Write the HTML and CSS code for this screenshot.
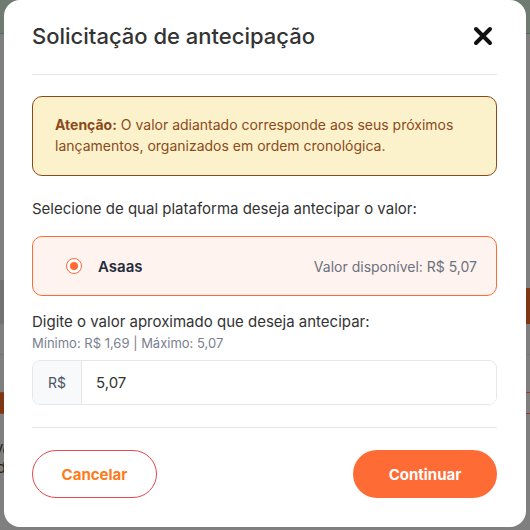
FILE: index.html
```html
<!DOCTYPE html>
<html lang="pt-BR">
<head>
  <meta charset="UTF-8">
  <meta name="viewport" content="width=device-width, initial-scale=1.0">
  <title>Solicitação de antecipação</title>
  <link rel="stylesheet" href="styles.css">
</head>
<body>

<div class="page">
  <div class="page-top"></div>
  <div class="page-band">
    <div class="band-left"></div>
    <div class="band-right"></div>
  </div>
  <div class="page-rule"></div>
  <div class="page-alert"></div>
  <div class="page-text">Ve<br>ld</div>
</div>

<div class="modal">
  <div class="modal-content">
    <div class="modal-header">
      <h2>Solicitação de antecipação</h2>
      <span class="close">
        <svg width="20" height="20" viewBox="0 0 20 20"><path d="M3 3 L17 17 M17 3 L3 17" stroke="#111" stroke-width="4" stroke-linecap="round"/></svg>
      </span>
    </div>

    <div class="alert">
      <strong>Atenção:</strong> O valor adiantado corresponde aos seus próximos lançamentos, organizados em ordem cronológica.
    </div>

    <p class="label">Selecione de qual plataforma deseja antecipar o valor:</p>

    <label class="option">
      <span class="radio"><span class="dot"></span></span>
      <span class="option-name">Asaas</span>
      <span class="option-value">Valor disponível: R$ 5,07</span>
    </label>

    <p class="label label-tight">Digite o valor aproximado que deseja antecipar:</p>
    <p class="hint">Mínimo: R$ 1,69 | Máximo: 5,07</p>

    <div class="input-group">
      <span class="prefix">R$</span>
      <input class="amount" type="text" value="5,07">
    </div>

    <div class="modal-footer">
      <button class="btn-cancel">Cancelar</button>
      <button class="btn-continue">Continuar</button>
    </div>
  </div>
</div>

</body>
</html>
```

FILE: styles.css
```css
body {
  font-family: Inter, 'Noto Sans', sans-serif;
  background-color: #7f7f7f;
  margin: 0;
  padding: 0;
  height: 530px;
  overflow: hidden;
}
.page {
  height: 530px;
}
.page-top {
  height: 33px;
  background-color: #6f7a71;
  border-bottom: 1px solid #4f6d57;
}
.page-band {
  display: flex;
  height: 44px;
  margin-top: 246px;
}
.band-left {
  width: 50%;
  background-color: #727272;
}
.band-right {
  width: 50%;
  margin-top: 8px;
  background-color: #7e3712;
}
.page-rule {
  height: 1px;
  margin-top: 30px;
  background-color: #777;
}
.page-alert {
  height: 20px;
  margin-top: 37px;
  border-top: 1px solid #9a3b2a;
  border-bottom: 1px solid #9a3b2a;
  background: linear-gradient(to right, #7e3712 6px, transparent 6px);
}
.page-text {
  margin-top: 27px;
  margin-left: -7px;
  font-size: 15px;
  line-height: 18px;
  color: #222;
}
.modal {
  position: fixed;
  left: 0;
  top: 0;
  width: 100%;
  height: 100%;
}
.modal-content {
  box-sizing: border-box;
  width: 522px;
  height: 527px;
  margin: 0 auto;
  padding: 0 29px 0 28px;
  background-color: #fff;
  border-radius: 16px;
  display: flex;
  flex-direction: column;
}
.modal-header {
  display: flex;
  justify-content: space-between;
  align-items: center;
  padding: 23px 0 25px 0;
  border-bottom: 1px solid #e6e6e6;
}
.modal-header h2 {
  margin: 0;
  font-size: 22px;
  font-weight: 500;
  color: #333;
}
.close {
  display: flex;
  margin-right: 4px;
  cursor: pointer;
}
.alert {
  margin-top: 21px;
  padding: 17px 22px 19px 22px;
  background-color: #fbf2cb;
  border: 1px solid #8a4a1c;
  border-radius: 10px;
  color: #8a4a1c;
  font-size: 14px;
  line-height: 21px;
}
.alert strong {
  font-weight: 700;
}
.label {
  margin: 23px 0 0 0;
  font-size: 15px;
  color: #333;
}
.label-tight {
  margin-top: 16px;
}
.option {
  margin-top: 18px;
  height: 60px;
  box-sizing: border-box;
  display: flex;
  align-items: center;
  padding: 0 19px 0 33px;
  background-color: #fff3ef;
  border: 1px solid #ff6b35;
  border-radius: 10px;
  cursor: pointer;
}
.radio {
  width: 16px;
  height: 16px;
  box-sizing: border-box;
  border: 1.5px solid #ff6b35;
  border-radius: 50%;
  display: flex;
  align-items: center;
  justify-content: center;
  background-color: #fff;
}
.dot {
  width: 8px;
  height: 8px;
  border-radius: 50%;
  background-color: #ff6b35;
}
.option-name {
  margin-left: 16px;
  font-size: 15px;
  font-weight: 600;
  color: #222b3a;
}
.option-value {
  margin-left: auto;
  font-size: 14px;
  color: #6b7280;
}
.hint {
  margin: 4px 0 0 0;
  font-size: 13px;
  color: #7a8090;
}
.input-group {
  margin-top: 9px;
  height: 45px;
  box-sizing: border-box;
  display: flex;
  border: 1px solid #e5e7eb;
  border-radius: 8px;
  overflow: hidden;
}
.prefix {
  width: 48px;
  display: flex;
  align-items: center;
  justify-content: center;
  background-color: #f8f9fb;
  border-right: 1px solid #e5e7eb;
  font-size: 14px;
  color: #4b5563;
}
.amount {
  flex: 1;
  border: none;
  outline: none;
  padding: 0 14px;
  font-family: inherit;
  font-size: 15px;
  color: #333;
}
.modal-footer {
  margin-top: 22px;
  padding-top: 22px;
  border-top: 1px solid #e6e6e6;
  display: flex;
  justify-content: space-between;
}
.modal-footer button {
  height: 48px;
  border-radius: 24px;
  font-family: inherit;
  font-size: 15px;
  font-weight: 700;
  cursor: pointer;
}
.btn-cancel {
  width: 125px;
  background-color: #fff;
  border: 1px solid #e5484d;
  color: #ff7a1a;
}
.btn-continue {
  width: 144px;
  background-color: #ff6b35;
  border: none;
  color: #fff;
}
```
